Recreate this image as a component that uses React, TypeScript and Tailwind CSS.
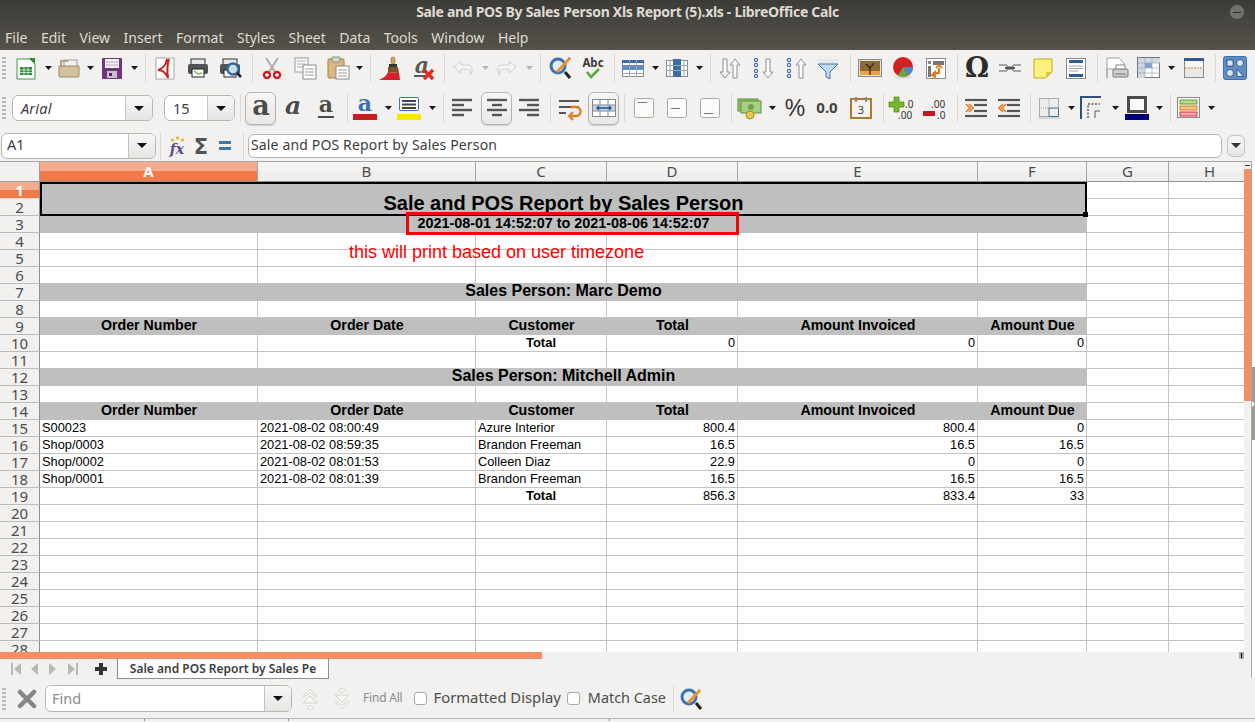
import type { ReactNode } from 'react';

const ui = "font-['Noto_Sans',sans-serif]";

function S({ children }: { children: ReactNode }) {
  return <svg className="overflow-visible" width="24" height="24" viewBox="0 0 24 24">{children}</svg>;
}

function Btn({ c = '', children }: { c?: string; children: ReactNode }) {
  return <div className={`w-6 h-6 shrink-0 ${c}`}><S>{children}</S></div>;
}

function Active({ c = '', children }: { c?: string; children: ReactNode }) {
  return (
    <div className={`w-[31px] h-[33px] shrink-0 flex items-center justify-center rounded-md border border-[#b4b3af] bg-gradient-to-b from-[#f7f6f5] to-[#e9e8e6] shadow-[0_1px_1px_rgba(0,0,0,0.15)] ${c}`}>
      <S>{children}</S>
    </div>
  );
}

function Drop({ c = '', off }: { c?: string; off?: boolean }) {
  return (
    <div className={`w-2 h-6 shrink-0 flex items-center justify-center ${c}`}>
      <svg width="7" height="4" viewBox="0 0 7 4"><path d="M0 0h7L3.5 4z" fill={off ? '#b5b5b5' : '#1a1a1a'} /></svg>
    </div>
  );
}

function Sep({ c = '' }: { c?: string }) {
  return <div className={`w-px h-7 shrink-0 bg-[#d9d8d5] ${c}`} />;
}

function Grip() {
  return <div className="w-1 h-[22px] ml-0.5 shrink-0 bg-[repeating-linear-gradient(to_bottom,#b9b8b5_0,#b9b8b5_2px,transparent_2px,transparent_4px)]" />;
}

function Combo({ c, divider, children }: { c: string; divider: string; children: ReactNode }) {
  return (
    <div className={`shrink-0 flex rounded-md border border-[#b7b6b1] bg-white overflow-hidden ${c}`}>
      <div className="flex-1 min-w-0 flex items-center pl-[6px] text-[14.500px] text-[#3d3d3d]">{children}</div>
      <div className={`shrink-0 flex items-center justify-center border-l border-[#c4c3bf] bg-gradient-to-b from-[#f8f7f6] to-[#e6e5e3] ${divider}`}>
        <svg width="10" height="5" viewBox="0 0 10 5"><path d="M0 0h10L5 5z" fill="#111" /></svg>
      </div>
    </div>
  );
}

const lines = (ys: number[], x1: number, x2: number, color = '#555', w = 2) =>
  ys.map(y => <line key={y} x1={x1} x2={x2} y1={y} y2={y} stroke={color} strokeWidth={w} />);

const Undo = ({ flip }: { flip?: boolean }) => (
  <path transform={flip ? 'matrix(-1 0 0 1 24 0)' : undefined} d="M10 5 3 11l7 6v-4h6c3 0 4 2 3 6 4-5 2-10-3-10h-6z" fill="#f6f6f5" stroke="#cfcecb" />
);
const ArrowDown = ({ x }: { x: number }) => (
  <path transform={`translate(${x} 0)`} d="M4 3h4v13h3l-5 6-5-6h3z" fill="#fbfbfb" stroke="#8d8d8d" />
);
const ArrowUp = ({ x }: { x: number }) => (
  <path transform={`translate(${x} 0)`} d="M4 22h4V9h3L6 3 1 9h3z" fill="#fbfbfb" stroke="#8d8d8d" />
);
const Dots = ({ x }: { x: number }) => (
  <g fill="#fff" stroke="#3f6fa8" strokeWidth="1.2">
    {[4, 9, 15, 20].map(y => <circle key={y} cx={x} cy={y} r="1.6" />)}
  </g>
);
const Letter = ({ fill = '#4b4b4b', italic, y = 17, size = 22 }: { fill?: string; italic?: boolean; y?: number; size?: number }) => (
  <text x="12" y={y} textAnchor="middle" fontSize={size} fontWeight="700" fontStyle={italic ? 'italic' : 'normal'} fontFamily="'DejaVu Serif',serif" fill={fill}>a</text>
);

function Toolbar1() {
  return (
    <div className="h-9 flex items-center">
      <Grip />
      <Btn c="ml-2"><path d="M3 3h13l5 5v15H3z" fill="#fff" stroke="#3b9b3b" /><path d="M15 2h6v6z" fill="#2d8f35" /><rect x="6" y="11" width="12" height="8" fill="#2e8b3a" /><path d="M6 14h12M6 16.500h12M10 11v8M14 11v8" stroke="#dff3df" strokeWidth=".8" /></Btn>
      <Drop c="ml-1.5" />
      <Btn c="ml-[5px]"><rect x="7" y="4" width="13" height="7" fill="#f2f2f0" stroke="#9b9b95" /><path d="M3 4h7l2 2H5v5H3z" fill="#b9a684" /><path d="M2 10h20v10a1 1 0 0 1-1 1H3a1 1 0 0 1-1-1z" fill="#d3c19c" stroke="#9a8965" /></Btn>
      <Drop c="ml-[5px]" />
      <Btn c="ml-1.5"><rect x="2" y="2" width="20" height="21" rx="1" fill="#71347f" /><rect x="5" y="3" width="14" height="9" fill="#f4f1f6" /><path d="M6 6h12M6 9h12" stroke="#b8a9c0" /><rect x="7" y="15" width="10" height="7" fill="#cbbdd2" /><rect x="9" y="17" width="3" height="3" fill="#4b2a55" /></Btn>
      <Drop c="ml-1.5" />
      <Sep c="ml-[7px]" />
      <Btn c="ml-[7px]"><rect x="3" y="2" width="18" height="21" fill="#fff" stroke="#a5a5a5" /><path d="M14 3c-1 6-5 10-9 11 4 0 8 3 10 8-1-7-1-13 1-19" fill="none" stroke="#c8201e" strokeWidth="2" /></Btn>
      <Btn c="ml-[9px]"><rect x="5" y="3" width="14" height="6" fill="#e8e8e8" stroke="#333" /><rect x="2" y="8" width="20" height="10" rx="2" fill="#4f5355" /><rect x="6" y="13" width="12" height="8" fill="#fff" stroke="#222" /><path d="M8 15l4 3 4-1" stroke="#78b06c" strokeWidth="1.500" fill="none" /></Btn>
      <Btn c="ml-[9px]"><rect x="4" y="3" width="14" height="6" fill="#e8e8e8" stroke="#333" /><rect x="1" y="8" width="20" height="10" rx="2" fill="#4f5355" /><rect x="5" y="14" width="12" height="7" fill="#fff" stroke="#222" /><circle cx="14" cy="13" r="5.500" fill="#c9deea" stroke="#35679f" strokeWidth="2.400" /><path d="M18 17l4 4" stroke="#222" strokeWidth="2.500" /></Btn>
      <Sep c="ml-[9px]" />
      <Btn c="ml-[7px]"><path d="M6 2l9 14M18 2L9 16" stroke="#a9a9a9" strokeWidth="1.800" /><circle cx="7" cy="19" r="3" fill="#fff" stroke="#c8201e" strokeWidth="2.400" /><circle cx="17" cy="19" r="3" fill="#fff" stroke="#c8201e" strokeWidth="2.400" /></Btn>
      <Btn c="ml-[9px]"><rect x="2" y="2" width="13" height="14" fill="#fff" stroke="#9a9a9a" /><path d="M4 5h9M4 8h9M4 11h7" stroke="#a8a8a8" /><rect x="10" y="9" width="13" height="14" fill="#fff" stroke="#8a8a8a" /><path d="M12 13h9M12 16h9M12 19h9" stroke="#9a9a9a" /></Btn>
      <Btn c="ml-[9px]"><rect x="2" y="3" width="16" height="19" rx="1" fill="#dcb77f" stroke="#a67f3f" /><rect x="6" y="1" width="8" height="5" rx="1" fill="#d5d5d3" stroke="#8a8a8a" /><rect x="10" y="10" width="13" height="13" fill="#fff" stroke="#8a8a8a" /><path d="M12 14h9M12 17h9M12 20h9" stroke="#9a9a9a" /></Btn>
      <Drop c="ml-[5px]" />
      <Sep c="ml-[7px]" />
      <Btn c="ml-2"><rect x="12" y="1" width="4" height="7" rx="2" fill="#d0a565" stroke="#8a6a3a" strokeWidth=".6" /><rect x="10" y="8" width="8" height="3" fill="#333" /><path d="M9 11h10l1 6-11-1z" fill="#7a5226" /><path d="M0 24c5-2 8-5 9-8l11 1 1 7z" fill="#d7202a" /></Btn>
      <Btn c="ml-[9px]"><text x="10" y="17" textAnchor="middle" fontSize="22" fontWeight="700" fontStyle="italic" fontFamily="'DejaVu Serif',serif" fill="#5a5a5a">a</text><path d="M2 20h14" stroke="#5a5a5a" strokeWidth="2" /><path d="M12 14l9 9M21 14l-9 9" stroke="#e02b20" strokeWidth="3.400" /></Btn>
      <Sep c="ml-2" />
      <Btn c="ml-1.5"><Undo /></Btn>
      <Drop c="ml-1.5" off />
      <Btn c="ml-1.5"><Undo flip /></Btn>
      <Drop c="ml-1.5" off />
      <Sep c="ml-[7px]" />
      <Btn c="ml-[7px]"><circle cx="10" cy="10" r="7" fill="#e4ecf4" stroke="#3e71b0" strokeWidth="3" /><path d="M17 16l5 6" stroke="#222" strokeWidth="3" /><path d="M21 3 9 16" stroke="#e8932e" strokeWidth="3" /><path d="M21 3l1-1" stroke="#d84a3a" strokeWidth="3" /></Btn>
      <Btn c="ml-[9px]"><text x="12" y="11" textAnchor="middle" fontSize="11.500" fontWeight="700" fontFamily="'Noto Sans',sans-serif" fill="#3b3b3b">Abc</text><path d="M6 16l4 5 8-8" fill="none" stroke="#5cab3c" strokeWidth="2.600" /></Btn>
      <Sep c="ml-[9px]" />
      <Btn c="ml-1.5"><rect x="1.500" y="4.500" width="21" height="16" fill="#fff" stroke="#8a8a8a" /><rect x="1" y="4" width="22" height="3" fill="#3b6ca8" /><rect x="1" y="9" width="22" height="5" fill="#5f8bc0" /><path d="M8.500 4v17M15.500 4v17M1 17.500h22" stroke="#9aa7b5" /></Btn>
      <Drop c="ml-1.5" />
      <Btn c="ml-1.5"><rect x="1.500" y="4.500" width="21" height="16" fill="#fff" stroke="#8a8a8a" /><rect x="8" y="3" width="8" height="18" fill="#3b6ca8" /><path d="M1 9.500h22M1 14.500h22M5 4v17M19 4v17" stroke="#9aa7b5" /></Btn>
      <Drop c="ml-1.5" />
      <Sep c="ml-[7px]" />
      <Btn c="ml-[7px]"><ArrowDown x={1} /><ArrowUp x={11} /></Btn>
      <Btn c="ml-[9px]"><Dots x={5} /><ArrowDown x={11} /></Btn>
      <Btn c="ml-[9px]"><Dots x={5} /><ArrowUp x={11} /></Btn>
      <Btn c="ml-2"><path d="M2 4h20M4 6h16" stroke="#c4d8ec" strokeDasharray="2 1" /><path d="M2 8h20l-8 8v7l-4-2v-5z" fill="#bfd8ef" stroke="#3f76ae" /></Btn>
      <Sep c="ml-2.5" />
      <Btn c="ml-[7px]"><rect x=".500" y="3.500" width="23" height="17" fill="#e2e2e2" stroke="#8b8b8b" /><rect x="2" y="5" width="20" height="14" fill="#8a6a35" /><path d="M2 15h20v4H2z" fill="#eba43a" /><path d="M12 19v-7M12 12l-4-4M12 12l4-5" stroke="#2c2116" strokeWidth="1.200" /></Btn>
      <Btn c="ml-[9px]"><ellipse cx="12" cy="21" rx="9" ry="2" fill="#ddd" /><circle cx="12" cy="11" r="10" fill="#d71f1f" /><path d="M12 11h10a10 10 0 0 1-5 8.700z" fill="#4f86c6" /><path d="M12 11l5 8.700a10 10 0 0 1-10 0z" fill="#6da83a" /></Btn>
      <Btn c="ml-[9px]"><rect x="2.500" y="2.500" width="19" height="20" fill="#fff" stroke="#8a8a8a" /><rect x="9" y="5" width="11" height="4" fill="#777" /><rect x="4" y="10" width="3" height="11" fill="#777" /><rect x="4" y="5" width="3" height="3" fill="#888" /><path d="M10 20v-3h5v-5" fill="none" stroke="#e07b22" strokeWidth="2.200" /><path d="M12 12l3-3 3 3M8 19l3-3v5z" fill="none" stroke="#e07b22" strokeWidth="1.800" /></Btn>
      <Sep c="ml-[9px]" />
      <Btn c="ml-[7px]"><text x="12" y="21" textAnchor="middle" fontSize="27" fontWeight="700" fontFamily="'DejaVu Serif',serif" fill="#2b2b2b">Ω</text></Btn>
      <Btn c="ml-[9px]"><path d="M1 9h7l2 2h4l2-2h7M1 15h7l2-2h4l2 2h7" fill="none" stroke="#8a8a8a" strokeWidth="1.600" /><path d="M7 12h10" stroke="#555" strokeWidth="2" /></Btn>
      <Btn c="ml-[9px]"><path d="M3 3h18v13l-6 6H3z" fill="#fdf07d" stroke="#c3ab18" /><path d="M15 22v-6h6z" fill="#dac93f" /></Btn>
      <Btn c="ml-[9px]"><rect x="2.500" y="2.500" width="19" height="20" fill="#fff" stroke="#8a8a8a" /><rect x="5" y="4" width="14" height="3" fill="#2d5a9a" /><rect x="5" y="18" width="14" height="3" fill="#2d5a9a" /><path d="M5 10h14M5 12.500h14M5 15h9" stroke="#a8a8a8" /></Btn>
      <Sep c="ml-[9px]" />
      <Btn c="ml-[7px]"><path d="M2 2h12l5 5v6H2v9" fill="#fff" stroke="#a0a0a0" /><path d="M2 22V2" stroke="#a0a0a0" /><rect x="8" y="13" width="15" height="8" rx="1" fill="#cfcfcf" stroke="#777" /><rect x="11" y="9" width="9" height="4" fill="#fff" stroke="#888" /><path d="M10 18h11" stroke="#777" /></Btn>
      <Btn c="ml-2"><rect x=".500" y="1.500" width="22" height="20" fill="#fff" stroke="#777" /><path d="M1 2h22v5H8v15H1z" fill="#cdd9e6" /><rect x="8" y="7" width="7" height="5" fill="#7fa3cb" /><path d="M8 2v20M15 2v20M1 7h22M1 12h22M1 17h22" stroke="#9aa7b5" strokeWidth=".7" /></Btn>
      <Drop c="ml-1.5" />
      <Btn c="ml-[7px]"><rect x="2.500" y="2.500" width="19" height="19" fill="#e9e9e7" stroke="#8a8a8a" /><rect x="3" y="5" width="18" height="7" fill="#f8f8f8" /><rect x="2" y="2" width="20" height="3" fill="#2d5a9a" /><path d="M3 12h18" stroke="#e0771f" strokeDasharray="2 1" /></Btn>
      <Sep c="ml-[9px]" />
      <Btn c="ml-[7px]"><rect x=".500" y=".500" width="23" height="23" rx="2" fill="#5b8ecb" stroke="#3f6fa8" /><rect x="4" y="4" width="6" height="6" fill="#d8e4f2" stroke="#123" strokeWidth=".6" /><circle cx="17" cy="7" r="3.500" fill="#d8e4f2" stroke="#123" strokeWidth=".6" /><circle cx="7" cy="17" r="3.500" fill="#d8e4f2" stroke="#123" strokeWidth=".6" /><path d="M14 20.500 20.500 20.500 14 13z" fill="#d8e4f2" stroke="#123" strokeWidth=".6" /></Btn>
    </div>
  );
}

function Toolbar2() {
  return (
    <div className="h-11 flex items-center">
      <Grip />
      <Combo c="ml-1.5 w-[141px] h-[26px]" divider="w-[27px]"><span className="ml-0.5 pt-[2px] italic tracking-[0.2px]">Arial</span></Combo>
      <Combo c="ml-[11px] w-[71px] h-[26px]" divider="w-[27px]"><span className="ml-0.5 pt-[2px]">15</span></Combo>
      <Sep c="ml-[5px]" />
      <Active c="ml-1"><Letter size={27} y={19} /></Active>
      <Btn c="ml-[5px]"><Letter italic size={25} y={18} /></Btn>
      <Btn c="ml-[9px]"><Letter y={16} /><path d="M4 21h16" stroke="#4b4b4b" strokeWidth="2" /></Btn>
      <Sep c="ml-[9px]" />
      <Btn c="ml-[5px]"><Letter fill="#3b70b5" y={15} /><rect y="18" width="24" height="6" fill="#cc1a1f" /></Btn>
      <Drop c="ml-[7px]" />
      <Btn c="ml-[5px]"><rect x="2.500" y="1.500" width="19" height="13" rx="1" fill="#fff" stroke="#3b70b5" />{lines([5, 8.5, 12], 5, 19, '#444', 2)}<rect y="18" width="24" height="6" fill="#f6e900" /></Btn>
      <Drop c="ml-[7px]" />
      <Sep c="ml-[7px]" />
      <Btn c="ml-1.5">{lines([4, 14], 2, 22, '#555', 2.4)}{lines([9, 19], 2, 14, '#555', 2.4)}</Btn>
      <Active c="ml-[7px]">{lines([4, 14], 2, 22, '#555', 2.4)}{lines([9, 19], 7, 17, '#555', 2.4)}</Active>
      <Btn c="ml-[5px]">{lines([4, 14], 2, 22, '#555', 2.4)}{lines([9, 19], 10, 22, '#555', 2.4)}</Btn>
      <Sep c="ml-[9px]" />
      <Btn c="ml-[7px]">{lines([5, 11], 1, 21, '#555', 2)}{lines([17], 1, 8, '#555', 2)}<path d="M13 11h5a4.500 4.500 0 0 1 0 9h-5" fill="none" stroke="#e07b22" strokeWidth="2.400" /><path d="M15 16l-4 4 4 4" fill="none" stroke="#e07b22" strokeWidth="2" /></Btn>
      <Active c="ml-1.5"><rect x=".500" y="3.500" width="23" height="17" fill="#fff" stroke="#888" /><rect x="1" y="9" width="22" height="6" fill="#c3d4ea" /><path d="M1 9h22M1 15h22M8 4v5M16 4v5M8 15v5M16 15v5" stroke="#888" /><path d="M5 12h14M7 10l-2 2 2 2M17 10l2 2-2 2" fill="none" stroke="#25508c" strokeWidth="1.300" /></Active>
      <Sep c="ml-[5px]" />
      <Btn c="ml-[7px]"><rect x="2.500" y="2.500" width="19" height="19" rx="2" fill="#fbfbfa" stroke="#a8a8a4" /><path d="M6 6.500h9" stroke="#777" /></Btn>
      <Btn c="ml-[9px]"><rect x="2.500" y="2.500" width="19" height="19" rx="2" fill="#fbfbfa" stroke="#a8a8a4" /><path d="M6 12.500h9" stroke="#777" /></Btn>
      <Btn c="ml-[9px]"><rect x="2.500" y="2.500" width="19" height="19" rx="2" fill="#fbfbfa" stroke="#a8a8a4" /><path d="M6 17.500h9" stroke="#777" /></Btn>
      <Sep c="ml-[9px]" />
      <Btn c="ml-[5px]"><rect x="1" y="3" width="20" height="12" fill="#8fc06a" stroke="#5f8f42" /><rect x="4" y="5" width="20" height="12" fill="#a6d07f" stroke="#5f8f42" /><circle cx="14" cy="11" r="3" fill="#6f9f50" /><circle cx="13" cy="19" r="4" fill="#e8c84a" stroke="#a58a2a" /></Btn>
      <Drop c="ml-[7px]" />
      <Btn c="ml-[7px]"><text x="12" y="20" textAnchor="middle" fontSize="23" fontFamily="'Liberation Sans',sans-serif" fill="#333">%</text></Btn>
      <Btn c="ml-2"><text x="12" y="17" textAnchor="middle" fontSize="15" fontWeight="700" fontFamily="'Noto Sans',sans-serif" fill="#444">0.0</text></Btn>
      <Btn c="ml-2.5"><rect x="2" y="3" width="20" height="19" fill="#f4f3ef" stroke="#b07a2c" strokeWidth="2" /><path d="M7 1v5M17 1v5" stroke="#888" strokeWidth="2" /><text x="12" y="18" textAnchor="middle" fontSize="11" fontFamily="'Noto Sans',sans-serif" fill="#444">3</text></Btn>
      <Sep c="ml-2.5" />
      <Btn c="ml-[5px]"><path d="M5 1h5v5h5v5h-5v5H5v-5H0V6h5z" fill="#7ab52e" stroke="#4f8a18" strokeWidth=".8" /><text x="16" y="12" fontSize="10" fontFamily="'Noto Sans',sans-serif" fill="#333">.0</text><text x="9" y="23" fontSize="10" fontFamily="'Noto Sans',sans-serif" fill="#333">.00</text></Btn>
      <Btn c="ml-[9px]"><text x="9" y="12" fontSize="10" fontFamily="'Noto Sans',sans-serif" fill="#333">.00</text><rect x="1" y="15" width="12" height="5" fill="#c4161c" /><text x="15" y="23" fontSize="10" fontFamily="'Noto Sans',sans-serif" fill="#333">.0</text></Btn>
      <Sep c="ml-[11px]" />
      <Btn c="ml-1.5">{lines([4, 20], 1, 23, '#555', 2.2)}{lines([9, 15], 10, 23, '#555', 2.2)}<path d="M2 8l4 4-4 4M5 8l4 4-4 4" fill="none" stroke="#e07b22" strokeWidth="1.600" /></Btn>
      <Btn c="ml-[9px]">{lines([4, 20], 1, 23, '#555', 2.2)}{lines([9, 15], 10, 23, '#555', 2.2)}<path d="M6 8l-4 4 4 4M9 8l-4 4 4 4" fill="none" stroke="#e07b22" strokeWidth="1.600" /></Btn>
      <Sep c="ml-[9px]" />
      <Btn c="ml-1.5"><rect x="2.500" y="2.500" width="19" height="18" fill="#eceeec" stroke="#aaa" /><path d="M12 3v9H3" fill="none" stroke="#999" strokeDasharray="1 1" /><path d="M12 12h9.500v8.500H12z" fill="none" stroke="#3f6fa8" /><rect x="1" y="21" width="22" height="2" fill="#d5d5d3" /></Btn>
      <Drop c="ml-1.5" />
      <Btn c="ml-[5px]"><path d="M1 23V1h20" fill="none" stroke="#2d4f7f" strokeWidth="2" /><path d="M8 22V8h12" fill="none" stroke="#111" strokeDasharray="2 1.500" /><path d="M15 22v-7h5" fill="none" stroke="#555" /></Btn>
      <Drop c="ml-[7px]" />
      <Btn c="ml-1.5"><rect x="2" y="0" width="20" height="17" fill="#4c4c4c" /><rect x="5" y="3" width="14" height="11" fill="#fafafa" /><rect y="18" width="24" height="6" fill="#00007d" /></Btn>
      <Drop c="ml-1.5" />
      <Sep c="ml-[7px]" />
      <Btn c="ml-1.5"><rect x=".500" y="1.500" width="22" height="20" fill="#fbfbfa" stroke="#8a8a8a" /><rect x="3" y="4" width="17" height="4" fill="#b4dc8c" stroke="#5f9f3a" /><rect x="3" y="10" width="17" height="4" fill="#f7c48a" stroke="#e07b22" /><rect x="3" y="16" width="17" height="4" fill="#f7a9ac" stroke="#d9333f" /></Btn>
      <Drop c="ml-1.5" />
    </div>
  );
}

function FormulaBar() {
  return (
    <div className="h-[31px] flex items-center">
      <Combo c="ml-px w-[155px] h-[26px]" divider="w-[27px]"><span className="-ml-px pb-[1px]">A1</span></Combo>
      <Sep c="ml-1" />
      <Btn c="ml-1"><text x="12" y="20" textAnchor="middle" fontSize="14" fontWeight="700" fontStyle="italic" fontFamily="'DejaVu Serif',serif" fill="#5f4a86">fx</text><path d="M6 6h3M11 4h3M16 6h3" stroke="#e3b92c" strokeWidth="2.500" /></Btn>
      <Btn><text x="12" y="20" textAnchor="middle" fontSize="21" fontWeight="700" fontFamily="'DejaVu Sans',sans-serif" fill="#4f5355">Σ</text></Btn>
      <Btn><rect x="6" y="7" width="12" height="3" fill="#3f76ae" /><rect x="6" y="13" width="12" height="3" fill="#3f76ae" /></Btn>
      <Sep c="ml-1.5" />
      <div className="ml-1 w-[974px] h-6 shrink-0 flex items-center pl-[2px] pb-[2px] rounded-md border border-[#b7b6b1] bg-white text-[14px] tracking-[0.15px] text-[#3d3d3d]">Sale and POS Report by Sales Person</div>
      <div className="ml-[5px] w-[18px] h-[22px] shrink-0 flex items-center justify-center rounded-md border border-[#c4c3bf] bg-gradient-to-b from-[#f8f7f6] to-[#e6e5e3]">
        <svg width="10" height="5" viewBox="0 0 10 5"><path d="M0 0h10L5 5z" fill="#333" /></svg>
      </div>
    </div>
  );
}

const sheetFont = "font-['Liberation_Sans',Arial,sans-serif] text-black";

function RowHead({ n, active }: { n: number; active?: boolean }) {
  return (
    <div className={`flex items-center justify-center border-r border-b ${ui} text-[15px] h-[17px] leading-[17px] ${active
      ? 'border-r-[#8f8f8f] border-b-[#d8d8d8] bg-[linear-gradient(to_bottom,#f7ab8e_50%,#f27a48_50%)] text-white font-bold'
      : 'border-r-[#8f8f8f] border-b-[#bdbdbb] bg-[#f2f1f0] text-[#4c4c4c]'}`}>
      {n}
    </div>
  );
}

function Cell({ children, v }: { children?: ReactNode; v?: 'l' | 'r' | 'c' | 'b' }) {
  const align = v === 'r' ? 'justify-end pr-[2px]' : v === 'l' ? 'justify-start pl-[2px]' : 'justify-center';
  return (
    <div className={`h-[17px] flex items-center overflow-hidden whitespace-nowrap border-r border-b border-[#c3c3c3] bg-white text-[12.800px] ${sheetFont} ${align} ${v === 'b' ? 'font-bold text-[13px]' : ''}`}>
      {children}
    </div>
  );
}

function Blank({ n }: { n: number }) {
  return (
    <>
      <RowHead n={n} />
      <Cell /><Cell /><Cell /><Cell /><Cell /><Cell /><Cell /><Cell />
    </>
  );
}

function Banner({ n, size, children }: { n: number; size: string; children: ReactNode }) {
  return (
    <>
      <RowHead n={n} />
      <div className={`col-span-6 h-[17px] flex items-center justify-center bg-[#bfbfbf] font-bold whitespace-nowrap ${size} ${sheetFont}`}>{children}</div>
      <Cell /><Cell />
    </>
  );
}

function HeadRow({ n }: { n: number }) {
  return (
    <>
      <RowHead n={n} />
      {['Order Number', 'Order Date', 'Customer', 'Total', 'Amount Invoiced', 'Amount Due'].map(h => (
        <div key={h} className={`h-[17px] flex items-center justify-center pb-[2px] bg-[#bfbfbf] font-bold text-[14.200px] whitespace-nowrap ${sheetFont}`}>{h}</div>
      ))}
      <Cell /><Cell />
    </>
  );
}

function TotalRow({ n, vals }: { n: number; vals: string[] }) {
  return (
    <>
      <RowHead n={n} />
      <Cell /><Cell />
      <Cell v="b">Total</Cell>
      {vals.map((x, i) => <Cell key={i} v="r">{x}</Cell>)}
      <Cell /><Cell />
    </>
  );
}

const orders = [
  { n: 15, no: 'S00023', date: '2021-08-02 08:00:49', who: 'Azure Interior', total: '800.4', inv: '800.4', due: '0' },
  { n: 16, no: 'Shop/0003', date: '2021-08-02 08:59:35', who: 'Brandon Freeman', total: '16.5', inv: '16.5', due: '16.5' },
  { n: 17, no: 'Shop/0002', date: '2021-08-02 08:01:53', who: 'Colleen Diaz', total: '22.9', inv: '0', due: '0' },
  { n: 18, no: 'Shop/0001', date: '2021-08-02 08:01:39', who: 'Brandon Freeman', total: '16.5', inv: '16.5', due: '16.5' },
];

function Sheet() {
  const cols = ['A', 'B', 'C', 'D', 'E', 'F', 'G', 'H'];
  return (
    <div className="relative w-[1244px] h-[490px] overflow-hidden">
      <div className="grid grid-cols-[40px_218px_218px_131px_131px_240px_109px_82px_82px] auto-rows-min">
        <div className="h-5 bg-[#f2f1f0] border-r border-b border-[#9d9d9b]" />
        {cols.map(c => (
          <div key={c} className={`h-5 flex items-center justify-center border-r border-b border-r-[#a5a5a3] border-b-[#8f8f8f] ${ui} text-[15px] ${c === 'A'
            ? 'bg-[linear-gradient(to_bottom,#f7ab8e_50%,#f27a48_50%)] text-white font-bold'
            : 'bg-[linear-gradient(to_bottom,#f5f4f2_50%,#efeeec_50%)] text-[#4c4c4c]'}`}>{c}</div>
        ))}

        <RowHead n={1} active />
        <div className={`relative col-span-6 row-span-2 flex items-end justify-center border-2 border-black bg-[#bfbfbf] text-[20px] leading-[21px] font-bold ${sheetFont}`}>
          Sale and POS Report by Sales Person
          <div className="absolute -right-[3px] -bottom-[3px] w-[5px] h-[5px] bg-black" />
        </div>
        <Cell /><Cell />
        <RowHead n={2} />
        <Cell /><Cell />

        <Banner n={3} size="text-[14.400px] pb-[2px]">2021-08-01 14:52:07 to 2021-08-06 14:52:07</Banner>
        <Blank n={4} />
        <Blank n={5} />
        <Blank n={6} />
        <Banner n={7} size="text-[16px] pb-[4px]">Sales Person: Marc Demo</Banner>
        <Blank n={8} />
        <HeadRow n={9} />
        <TotalRow n={10} vals={['0', '0', '0']} />
        <Blank n={11} />
        <Banner n={12} size="text-[16px] pb-[4px]">Sales Person: Mitchell Admin</Banner>
        <Blank n={13} />
        <HeadRow n={14} />
        {orders.map(o => (
          <div key={o.n} className="contents">
            <RowHead n={o.n} />
            <Cell v="l">{o.no}</Cell>
            <Cell v="l">{o.date}</Cell>
            <Cell v="l">{o.who}</Cell>
            <Cell v="r">{o.total}</Cell>
            <Cell v="r">{o.inv}</Cell>
            <Cell v="r">{o.due}</Cell>
            <Cell /><Cell />
          </div>
        ))}
        <TotalRow n={19} vals={['856.3', '833.4', '33']} />
        {[20, 21, 22, 23, 24, 25, 26, 27, 28].map(n => <Blank key={n} n={n} />)}
      </div>

      {/* annotation drawn on top of the screenshot */}
      <div className="absolute left-[406px] top-[50px] w-[333px] h-[23px] border-[3px] border-[#ff0000]" />
      <div className="absolute left-[349px] top-[80px] font-['Liberation_Sans',Arial,sans-serif] text-[18px] leading-[21px] text-[#ff0000] whitespace-nowrap">this will print based on user timezone</div>
    </div>
  );
}

function TabNav({ d }: { d: string }) {
  return <svg width="10" height="12" viewBox="0 0 10 12"><path d={d} fill="#b9b8b5" /></svg>;
}

export default function App() {
  const menu = ['File', 'Edit', 'View', 'Insert', 'Format', 'Styles', 'Sheet', 'Data', 'Tools', 'Window', 'Help'];
  return (
    <div className={`w-[1255px] h-[722px] overflow-hidden bg-[#f2f1f0] ${ui}`}>
      <div className="h-[50px] bg-gradient-to-b from-[#3c3b37] to-[#55524b]">
        <div className="h-[25px] pb-[3px] flex items-center justify-center relative text-[14px] font-bold tracking-[-0.3px] text-[#dfdbd2]">
          Sale and POS By Sales Person Xls Report (5).xls - LibreOffice Calc
          <div className="absolute left-[1229px] top-[4px] w-4 h-4 rounded-full bg-[#72716c] border border-[#454440] flex items-center justify-center">
            <div className="w-2 h-px bg-[#2e2d2a]" />
          </div>
        </div>
        <div className="h-[25px] flex items-center gap-[13.500px] pl-[5px] text-[14px] text-[#dfdbd2]">
          {menu.map(m => <span key={m}>{m}</span>)}
        </div>
      </div>
      <Toolbar1 />
      <Toolbar2 />
      <FormulaBar />
      <div className="flex h-[518px]">
        <div className="w-[1251px]">
          <div className="flex border-t border-[#a9a9a7] h-[491px]">
            <Sheet />
            <div className="w-[7px] flex flex-col">
              <div className="h-[7px] flex items-center justify-center"><div className="w-[5px] h-px bg-[#333]" /></div>
              <div className="h-[232px] bg-[#f38e67]" />
            </div>
          </div>
          <div className="h-[7px] flex">
            <div className="w-[542px] bg-[#f38e67]" />
            <div className="ml-[697px] w-[5px] bg-[#a9a9a7] flex justify-center"><div className="w-px h-[5px] mt-px bg-black" /></div>
          </div>
          <div className="h-5 flex items-center">
            <div className="ml-[11px]"><TabNav d="M0 0h2v12H0zM10 0v12L3 6z" /></div>
            <div className="ml-[10px]"><TabNav d="M7 0v12L0 6z" /></div>
            <div className="ml-[8px]"><TabNav d="M0 0v12l7-6z" /></div>
            <div className="ml-[9px]"><TabNav d="M0 0v12l7-6zM8 0h2v12H8z" /></div>
            <svg className="ml-[17px]" width="12" height="12" viewBox="0 0 12 12"><path d="M4 0h4v4h4v4H8v4H4V8H0V4h4z" fill="#333" /></svg>
            <div className="ml-[10px] w-[212px] h-5 flex items-center justify-center bg-white border border-t-0 border-[#8e8e8c] text-[12px] font-semibold text-[#3d3d3d] whitespace-nowrap">Sale and POS Report by Sales Pe</div>
          </div>
        </div>
        <div className="w-1 h-[517px] border-l border-[#a9a9a7] bg-white">
          <div className="mt-[206px] h-[73px] bg-[#9b9a96] flex items-center">
            <svg width="3" height="6" viewBox="0 0 3 6"><path d="M0 0l3 3-3 3z" fill="#fff" /></svg>
          </div>
        </div>
      </div>
      <div className="h-[39px] flex items-center">
        <Grip />
        <svg className="ml-[11px]" width="20" height="20" viewBox="0 0 20 20"><path d="M3 3l14 14M17 3 3 17" stroke="#858585" strokeWidth="4.500" strokeLinecap="round" /></svg>
        <Combo c="ml-2 w-[247px] h-[27px]" divider="w-[27px]"><span className="text-[#8a8a8a]">Find</span></Combo>
        <svg className="ml-[8px]" width="20" height="22" viewBox="0 0 20 22"><path d="M10 1l7 7-3 0-4-4-4 4H3zM10 8l7 7H3zM10 17l3 3-3 2-3-2z" fill="#f7f7f6" stroke="#d5d4d1" /></svg>
        <svg className="ml-[12px]" width="20" height="22" viewBox="0 0 20 22"><path d="M10 21l7-7-3 0-4 4-4-4H3zM10 14l7-7H3zM10 5l3-3-3-2-3 2z" fill="#f7f7f6" stroke="#d5d4d1" /></svg>
        <span className="ml-[11px] pb-[2px] text-[12px] tracking-[-0.2px] text-[#8c8c8a]">Find All</span>
        <div className="ml-[11px] w-[13px] h-[13px] rounded-[3px] border border-[#a9a8a4] bg-white" />
        <span className="ml-[7px] pb-[2px] text-[14.800px] text-[#4c4c4c]">Formatted Display</span>
        <div className="ml-[6px] w-[13px] h-[13px] rounded-[3px] border border-[#a9a8a4] bg-white" />
        <span className="ml-[8px] pb-[2px] text-[14.400px] text-[#4c4c4c]">Match Case</span>
        <Sep c="ml-[7px]" />
        <Btn c="ml-[5px]"><circle cx="10" cy="10" r="7" fill="#e4ecf4" stroke="#3e71b0" strokeWidth="3" /><path d="M17 16l5 6" stroke="#222" strokeWidth="3" /><path d="M21 3 9 16" stroke="#e8932e" strokeWidth="3" /></Btn>
      </div>
      <div className="h-1 flex border-t border-[#b9b8b5]">
        <div className="ml-[144px] w-px h-[2px] bg-[#8a8a8a]" />
        <div className="ml-[143px] w-px h-[2px] bg-[#8a8a8a]" />
        <div className="ml-[320px] w-px h-[2px] bg-[#8a8a8a]" />
      </div>
    </div>
  );
}
